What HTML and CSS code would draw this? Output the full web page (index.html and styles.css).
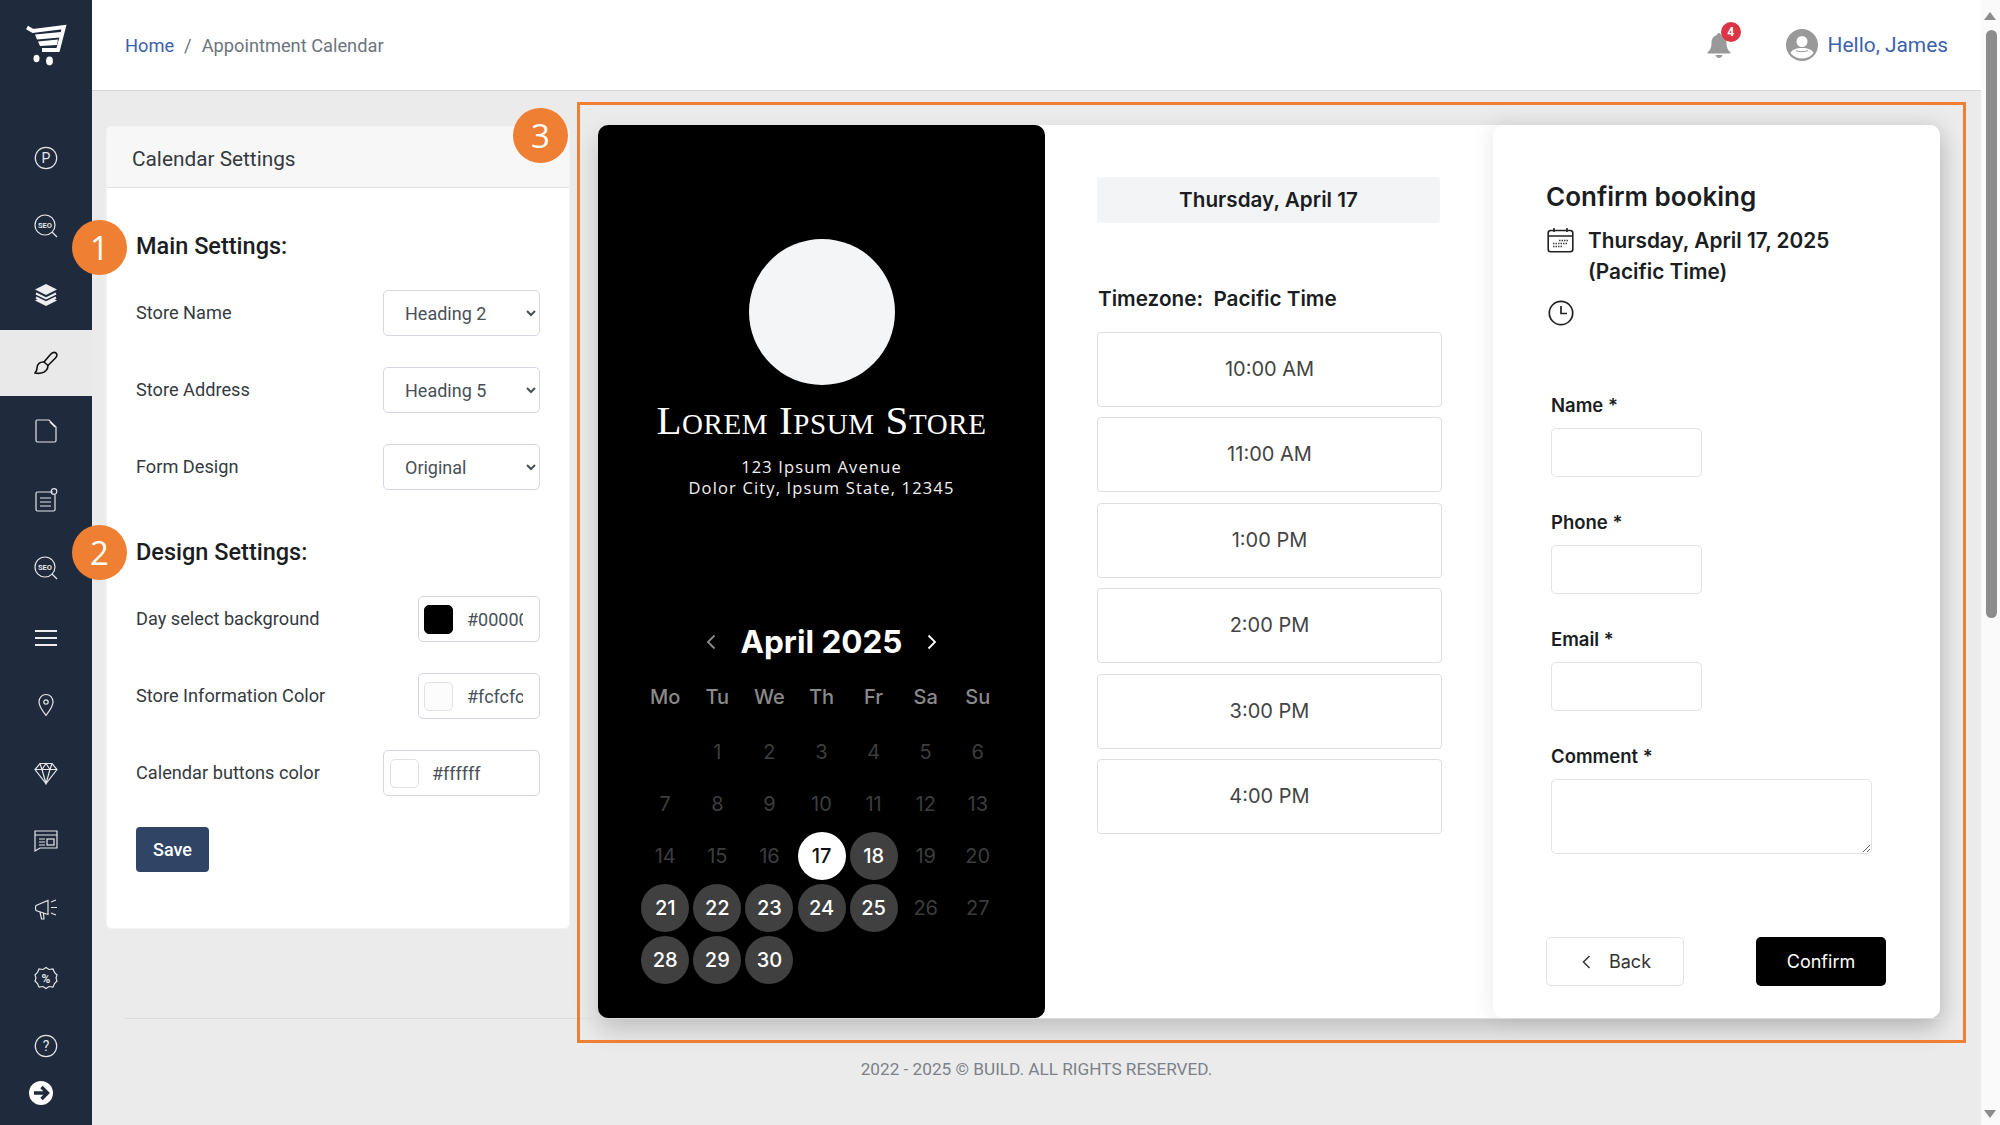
FILE: index.html
```html
<!DOCTYPE html>
<html>
<head>
<meta charset="utf-8">
<title>Appointment Calendar</title>
<link rel="stylesheet" href="styles.css">
</head>
<body>

<!-- left icon bar -->
<nav class="sidebar">
  <div class="logo">
    <svg width="42" height="42" viewBox="0 0 42 42">
      <path d="M2 3.5 L8 7 L39 3 L33 26 L17 26" fill="none" stroke="#fff" stroke-width="3.8"/>
      <path d="M10 10.5 L36 8 L35 13.5 L12 15.5 Z M13 17.5 L33 15.5 L32 21 L15 22 Z" fill="#fff"/>
      <ellipse cx="11.5" cy="34.5" rx="3" ry="3.8" fill="#fff"/>
      <ellipse cx="24.5" cy="37" rx="3.4" ry="4.4" fill="#fff"/>
    </svg>
  </div>
  <a class="nav-item"><svg class="ico" viewBox="0 0 24 24"><circle cx="12" cy="12" r="10.7"/><text x="12" y="17" class="ico-txt" font-size="14">P</text></svg></a>
  <a class="nav-item"><svg class="ico" viewBox="0 0 24 24"><circle cx="11" cy="11" r="10"/><path d="M18 18 L23 23"/><text x="11" y="14" class="ico-txt ico-bold" font-size="7.5">SEO</text></svg></a>
  <a class="nav-item"><svg class="ico" viewBox="0 0 24 24"><path class="solid" d="M12 1 L23 6.5 L12 12 L1 6.5 Z"/><path class="thick" d="M2 10.5 L12 15.5 L22 10.5 M2 14.5 L12 19.5 L22 14.5"/><path class="solid" d="M1 17.5 L12 23 L23 17.5 L19 15.5 L12 19 L5 15.5 Z"/></svg></a>
  <a class="nav-item active"><svg class="ico" viewBox="0 0 24 24"><path d="M22 2 C20 0.5 18 1.5 16 4 L10 11 L14 14.5 L21 7.5 C23 5.5 23.5 3.5 22 2 Z"/><path d="M10 11 C6 10.5 3 13 3 17 C3 19 2 21 1 22 C5 23 10 22 12 19.5 C14 17.5 14 15.5 14 14.5"/></svg></a>
  <a class="nav-item"><svg class="ico" viewBox="0 0 24 24"><path d="M3 1 L15 1 L22 8 L22 21.5 Q22 23 20.5 23 L3.5 23 Q2 23 2 21.5 L2 2.5 Q2 1 3 1 Z"/><path d="M16 3 L21 8"/></svg></a>
  <a class="nav-item"><svg class="ico" viewBox="0 0 24 24"><path d="M19 4 L3.5 4 Q2 4 2 5.5 L2 21.5 Q2 23 3.5 23 L19.5 23 Q21 23 21 21.5 L21 7"/><path d="M6 10 H17 M6 14 H17 M6 18 H17"/><circle cx="20" cy="3.5" r="2.8"/></svg></a>
  <a class="nav-item"><svg class="ico" viewBox="0 0 24 24"><circle cx="11" cy="11" r="10"/><path d="M18 18 L23 23"/><text x="11" y="14" class="ico-txt ico-bold" font-size="7.5">SEO</text></svg></a>
  <a class="nav-item"><svg class="ico" viewBox="0 0 24 24"><path class="thick" d="M1 7 H23 M1 14 H23 M1 21 H23"/></svg></a>
  <a class="nav-item"><svg class="ico" viewBox="0 0 24 24"><path d="M12 22.5 C8 17 5 13.5 5 9 C5 4.5 8 1.5 12 1.5 C16 1.5 19 4.5 19 9 C19 13.5 16 17 12 22.5 Z"/><circle cx="12" cy="9" r="2.2"/></svg></a>
  <a class="nav-item"><svg class="ico" viewBox="0 0 24 24"><path d="M6 2.5 H18 L23 8.5 L12 22.5 L1 8.5 Z"/><path d="M1 8.5 H23 M6 2.5 L8 8.5 L12 22.5 L16 8.5 L18 2.5 M8 8.5 L12 2.5 L16 8.5"/></svg></a>
  <a class="nav-item"><svg class="ico" viewBox="0 0 24 24"><path d="M1 2 H23 V19 H6 L1 22 Z"/><path d="M1 6 H23 M5 10 H11 M5 13 H11 M5 16 H11"/><rect x="13" y="10" width="7" height="6"/></svg></a>
  <a class="nav-item"><svg class="ico" viewBox="0 0 24 24"><path d="M2 8.5 L14 3.5 V17.5 L2 13.5 Q0.8 11 2 8.5 Z"/><path d="M6 15 L7.5 22 H10 L9.5 16"/><path d="M17 5 L22 3 M17 10.5 H23 M17 16 L22 18"/></svg></a>
  <a class="nav-item"><svg class="ico" viewBox="0 0 24 24"><path d="M12 1.5 L15 3.5 L19 3 L20.5 6.5 L23 9 L22 12 L23 15 L20.5 17.5 L19 21 L15 20.5 L12 22.5 L9 20.5 L5 21 L3.5 17.5 L1 15 L2 12 L1 9 L3.5 6.5 L5 3 L9 3.5 Z"/><text x="12" y="16.5" class="ico-txt ico-bold" font-size="12">%</text></svg></a>
  <a class="nav-item"><svg class="ico" viewBox="0 0 24 24"><circle cx="12" cy="12" r="10.7"/><text x="12" y="17" class="ico-txt" font-size="14">?</text></svg></a>
  <div class="nav-toggle">
    <svg width="24" height="24" viewBox="0 0 24 24"><circle cx="12" cy="12" r="12" fill="#fff"/><path d="M5 12 H18 M12.5 6 L18.5 12 L12.5 18" fill="none" stroke="#1f2a3c" stroke-width="3.4"/></svg>
  </div>
</nav>

<div class="main">
  <header class="topbar">
    <div class="crumbs"><a class="link">Home</a><span class="crumb-sep">/</span><span>Appointment Calendar</span></div>
    <div class="top-right">
      <div class="bell">
        <svg width="24" height="26" viewBox="0 0 24 26"><path d="M12 1 C13.2 1 14 2 14 3 C18 4 19.5 7.5 19.5 11 C19.5 16 21 18 23.5 20.5 V21.5 H0.5 V20.5 C3 18 4.5 16 4.5 11 C4.5 7.5 6 4 10 3 C10 2 10.8 1 12 1 Z M8.5 23 H15.5 C15 25 13.5 26 12 26 C10.5 26 9 25 8.5 23 Z" fill="#999"/></svg>
        <span class="bell-count">4</span>
      </div>
      <svg class="avatar" width="32" height="32" viewBox="0 0 32 32"><circle cx="16" cy="16" r="16" fill="#999"/><circle cx="16" cy="12.5" r="5.5" fill="#fff"/><path d="M4.5 24 C6 20.5 10 19 16 19 C22 19 26 20.5 27.5 24 C25 27.5 21 29.5 16 29.5 C11 29.5 7 27.5 4.5 24 Z" fill="#fff"/><path d="M10 21.5 C12 23 20 23 22 21.5" fill="none" stroke="#999" stroke-width="1"/></svg>
      <a class="link hello">Hello, James</a>
    </div>
  </header>

  <div class="content">
    <section class="settings">
      <div class="settings-head">Calendar Settings</div>
      <div class="settings-body">
        <h5 class="set-title">Main Settings:</h5>
        <div class="set-row"><label>Store Name</label><select class="sel"><option>Heading 2</option></select></div>
        <div class="set-row"><label>Store Address</label><select class="sel"><option>Heading 5</option></select></div>
        <div class="set-row"><label>Form Design</label><select class="sel"><option>Original</option></select></div>

        <h5 class="set-title second">Design Settings:</h5>
        <div class="set-row"><label>Day select background</label>
          <div class="color-box short"><i class="swatch black"></i><span class="color-val">#000000</span></div></div>
        <div class="set-row"><label>Store Information Color</label>
          <div class="color-box short"><i class="swatch off"></i><span class="color-val">#fcfcfc</span></div></div>
        <div class="set-row"><label>Calendar buttons color</label>
          <div class="color-box"><i class="swatch"></i><span class="color-val">#ffffff</span></div></div>
        <button class="save">Save</button>
      </div>
    </section>

    <section class="booking">
      <div class="store">
        <div class="store-logo"></div>
        <div class="store-name">Lorem Ipsum Store</div>
        <div class="store-addr">123 Ipsum Avenue<br>Dolor City, Ipsum State, 12345</div>
        <div class="cal-head">
          <svg width="12" height="18" viewBox="0 0 12 18"><path d="M9.5 2.5 L3 9 L9.5 15.5" fill="none" stroke="#8a8a8a" stroke-width="1.8"/></svg>
          <span class="cal-month">April 2025</span>
          <svg width="12" height="18" viewBox="0 0 12 18"><path d="M2.5 2.5 L9 9 L2.5 15.5" fill="none" stroke="#fff" stroke-width="1.8"/></svg>
        </div>
        <div class="cal-grid">
          <b class="wd">Mo</b><b class="wd">Tu</b><b class="wd">We</b><b class="wd">Th</b><b class="wd">Fr</b><b class="wd">Sa</b><b class="wd">Su</b>
          <span></span><span class="d">1</span><span class="d">2</span><span class="d">3</span><span class="d">4</span><span class="d">5</span><span class="d">6</span>
          <span class="d">7</span><span class="d">8</span><span class="d">9</span><span class="d">10</span><span class="d">11</span><span class="d">12</span><span class="d">13</span>
          <span class="d">14</span><span class="d">15</span><span class="d">16</span><span class="d sel-day">17</span><span class="d on">18</span><span class="d">19</span><span class="d">20</span>
          <span class="d on">21</span><span class="d on">22</span><span class="d on">23</span><span class="d on">24</span><span class="d on">25</span><span class="d">26</span><span class="d">27</span>
          <span class="d on">28</span><span class="d on">29</span><span class="d on">30</span>
        </div>
      </div>

      <div class="times">
        <div class="times-date">Thursday, April 17</div>
        <div class="times-zone">Timezone:&nbsp; Pacific Time</div>
        <div class="slot">10:00 AM</div>
        <div class="slot">11:00 AM</div>
        <div class="slot">1:00 PM</div>
        <div class="slot">2:00 PM</div>
        <div class="slot">3:00 PM</div>
        <div class="slot">4:00 PM</div>
      </div>

      <div class="confirm">
        <h3 class="confirm-title">Confirm booking</h3>
        <div class="confirm-when">
          <svg width="27" height="26" viewBox="0 0 27 26"><rect x="1.2" y="3.5" width="24.6" height="21.3" rx="2.5" fill="none" stroke="#222" stroke-width="1.6"/><path d="M1.5 9 H25.5 M7 1 V5 M20 1 V5" stroke="#222" stroke-width="1.6"/><path d="M6 19.5 H15 M6 16.5 H15 M12 13.5 H21 M16 16.5 H21" stroke="#444" stroke-width="1.6" stroke-dasharray="1.5 1"/></svg>
          <span>Thursday, April 17, 2025<br>(Pacific Time)</span>
        </div>
        <svg class="clock" width="26" height="26" viewBox="0 0 26 26"><circle cx="13" cy="13" r="11.7" fill="none" stroke="#222" stroke-width="1.7"/><path d="M13 6 V13.5 H19" fill="none" stroke="#222" stroke-width="1.7"/></svg>
        <form class="book-form">
          <label>Name *</label><input type="text">
          <label>Phone *</label><input type="text">
          <label>Email *</label><input type="text">
          <label>Comment *</label><textarea></textarea>
        </form>
        <div class="actions">
          <button class="back"><svg width="11" height="16" viewBox="0 0 11 16"><path d="M8.5 2 L2.5 8 L8.5 14" fill="none" stroke="#333" stroke-width="1.5"/></svg>Back</button>
          <button class="go">Confirm</button>
        </div>
      </div>
    </section>
  </div>

  <footer class="foot">2022 - 2025 © BUILD. ALL RIGHTS RESERVED.</footer>
</div>

<div class="scrollbar">
  <i class="sb-up"></i>
  <i class="sb-thumb"></i>
  <i class="sb-down"></i>
</div>

<!-- annotations on top of the screenshot -->
<div class="frame"></div>
<div class="mark mark-1">1</div>
<div class="mark mark-2">2</div>
<div class="mark mark-3">3</div>

</body>
</html>
```

FILE: styles.css
```css
* { box-sizing: border-box; }
html, body { margin: 0; height: 100%; }
body { position: relative; display: flex; width: 2000px; height: 1125px; overflow: hidden; background: #ebebeb; font-family: Roboto, sans-serif; font-size: 18.2px; color: #212529; }

/* sidebar */
.sidebar { width: 92px; flex: none; background: #1f2a3c; }
.logo { height: 124px; padding: 24px 0 0 25px; }
.nav-item { display: flex; align-items: center; justify-content: center; height: 68.3px; }
.nav-item.active { background: #e9e9e9; margin: 1.5px 0; height: 65.3px; }
.ico { width: 24px; height: 24px; fill: none; stroke: #e4e6ea; stroke-width: 1.2; }
.ico .solid { fill: #eceef1; stroke: none; }
.ico .thick { stroke-width: 2; stroke: #eceef1; }
.ico-txt { fill: #e4e6ea; stroke: none; text-anchor: middle; font-family: Roboto, sans-serif; }
.ico-bold { font-weight: 700; }
.active .ico { stroke: #111; stroke-width: 1.6; }
.nav-toggle { margin: 1px 0 0 29px; height: 24px; }

/* top bar */
.main { width: 1889px; flex: none; display: flex; flex-direction: column; }
.topbar { height: 91px; flex: none; display: flex; align-items: center; justify-content: space-between; padding: 0 33px; background: #fff; border-bottom: 1px solid #d6d6d6; color: #6c757d; font-size: 18.25px; }
.link { color: #3c62ab; }
.crumb-sep { margin: 0 10px; }
.top-right { display: flex; align-items: center; }
.bell { position: relative; height: 26px; margin-right: 55px; }
.bell-count { position: absolute; top: -10px; left: 14px; width: 20px; height: 20px; border-radius: 50%; background: #dc3545; color: #fff; font-size: 12px; font-weight: 700; line-height: 20px; text-align: center; }
.avatar { margin-right: 10px; }
.hello { font-size: 20.9px; }

/* content */
.content { height: 927px; flex: none; display: flex; gap: 28px; padding: 34px 0 0 14px; }
.settings { width: 464px; height: 803px; flex: none; margin-top: 1px; background: #fff; border: 1px solid #f3f3f3; border-radius: 5px; }
.settings-head { height: 61px; padding: 3px 25px 0; background: #f7f7f7; border-bottom: 1px solid #e2e2e2; font-size: 20.8px; line-height: 58px; color: #343a40; border-radius: 5px 5px 0 0; }
.settings-body { padding: 43px 29px 0 29px; }
.set-title { margin: 0 0 29px; font-size: 23.5px; font-weight: 500; line-height: 30px; color: #1a1d21; }
.set-title.second { margin-top: 47px; }
.set-row { display: flex; align-items: center; justify-content: space-between; height: 46px; margin-bottom: 31px; color: #343a40; }
.set-row label { padding-bottom: 2px; }
.sel { width: 157px; height: 46px; padding-left: 17px; background: #fff; border: 1px solid #d5d6e0; border-radius: 5px; font-family: Roboto, sans-serif; font-size: 18px; color: #495057; }
.color-box { display: flex; align-items: center; width: 157px; height: 46px; padding-left: 6px; background: #fff; border: 1px solid #d5d6e0; border-radius: 5px; color: #495057; font-size: 18px; }
.color-box.short { width: 122px; padding-left: 5px; }
.swatch { width: 29px; height: 29px; flex: none; margin-right: 13px; background: #fff; border: 1px solid #e2e2e2; border-radius: 5px; }
.short .swatch { margin-right: 14px; }
.swatch.black { background: #000; border-color: #000; }
.swatch.off { background: #fcfcfc; }
.color-val { width: 56px; overflow: hidden; white-space: nowrap; }
.save { width: 73px; height: 45px; padding: 0; background: #304466; border: 0; border-radius: 4px; color: #fff; font-family: Roboto, sans-serif; font-size: 18px; font-weight: 500; }

/* booking widget */
.booking { display: flex; width: 1342px; height: 893px; flex: none; background: #fff; border-radius: 10px; box-shadow: 0 12px 24px rgba(0,0,0,.18); font-family: Inter, sans-serif; color: #1a1d21; }
.store { width: 447px; flex: none; display: flex; flex-direction: column; align-items: center; background: #000; border-radius: 10px; color: #fff; }
.store-logo { width: 146px; height: 146px; margin-top: 114px; border-radius: 50%; background: #f4f5f7; }
.store-name { margin-top: 13px; font-family: "Liberation Serif", serif; font-variant: small-caps; font-size: 41px; line-height: 44px; letter-spacing: .6px; }
.store-addr { margin-top: 13.5px; font-family: "Open Sans", sans-serif; font-size: 16.5px; line-height: 21px; letter-spacing: 1.15px; text-align: center; color: #f0f0f0; }
.cal-head { display: flex; align-items: center; justify-content: center; gap: 23px; margin-top: 122.5px; height: 44px; }
.cal-month { font-size: 31.5px; font-weight: 700; line-height: 44px; }
.cal-grid { display: grid; grid-template-columns: repeat(7, 52.1px); grid-auto-rows: 52px; margin-top: 10px; justify-items: center; align-items: center; font-size: 20px; }
.wd { padding-bottom: 7px; font-weight: 500; color: #8a8a8a; }
.d { width: 48px; height: 48px; border-radius: 50%; line-height: 48px; text-align: center; color: #3d3d3d; }
.d.on { background: #404040; color: #fff; font-weight: 500; }
.d.sel-day { background: #fff; color: #111; font-weight: 500; }

.times { width: 448px; flex: none; padding: 52px 51px 0 52px; }
.times-date { height: 46px; margin-right: 2px; background: #f3f4f6; font-size: 20.7px; font-weight: 600; line-height: 46px; text-align: center; border-radius: 3px; }
.times-zone { margin: 58.5px 0 16px; padding-left: 1px; font-size: 20.7px; font-weight: 600; line-height: 34px; }
.slot { height: 75px; margin-bottom: 10.5px; background: #fff; border: 1px solid #dedfe3; border-radius: 4px; font-size: 20px; line-height: 73px; text-align: center; color: #444; }

.confirm { width: 447px; flex: none; padding: 56px 0 0 53px; background: #fff; border-radius: 10px; box-shadow: 0 0 22px rgba(0,0,0,.1); }
.confirm-title { margin: 0; font-size: 26px; font-weight: 600; line-height: 32px; }
.confirm-when { display: flex; gap: 14px; margin: 12px 0 0 1px; font-size: 20.8px; font-weight: 600; line-height: 31px; }
.confirm-when svg { margin-top: 2px; }
.clock { display: block; margin: 13px 0 0 2px; }
.book-form { margin: 67px 0 0 5px; }
.book-form label { display: block; height: 24px; margin-bottom: 11px; font-size: 18.5px; font-weight: 600; line-height: 24px; }
.book-form input { display: block; width: 151px; height: 49px; margin-bottom: 33px; background: #fff; border: 1px solid #e2e3e6; border-radius: 5px; }
.book-form textarea { display: block; width: 321px; height: 75px; background: #fff; border: 1px solid #e2e3e6; border-radius: 5px; }
.actions { display: flex; justify-content: space-between; width: 340px; margin-top: 83px; }
.actions button { height: 49px; border-radius: 5px; font-family: Inter, sans-serif; font-size: 18px; }
.back { display: flex; align-items: center; justify-content: center; gap: 17px; width: 138px; padding-left: 8px; background: #fff; border: 1px solid #e2e3e6; color: #333; }
.go { width: 130px; background: #000; border: 0; color: #fff; }

.foot { margin: 0 33px; padding-top: 38px; border-top: 1px solid #dcdcdc; color: #7b8188; font-size: 17.2px; line-height: 24px; text-align: center; }

/* scrollbar */
.scrollbar { position: relative; width: 19px; flex: none; background: #fafafa; }
.sb-up { position: absolute; top: 12px; left: 3px; border: 6.5px solid transparent; border-top: 0; border-bottom: 8px solid #8c8c8c; }
.sb-thumb { position: absolute; top: 30px; left: 5px; width: 11px; height: 588px; border-radius: 6px; background: #8c8c8c; }
.sb-down { position: absolute; bottom: 7px; left: 3px; border: 6.5px solid transparent; border-bottom: 0; border-top: 8px solid #8c8c8c; }

/* annotations */
.frame { position: absolute; left: 577px; top: 102px; width: 1389px; height: 941px; border: 3px solid #ee7f33; }
.mark { position: absolute; width: 55px; height: 55px; border-radius: 50%; background: #ee7f33; color: #fff; font-family: "Open Sans", sans-serif; font-size: 33px; line-height: 55px; text-align: center; }
.mark-1 { left: 72px; top: 220px; }
.mark-2 { left: 72px; top: 525px; }
.mark-3 { left: 513px; top: 108px; }
```
